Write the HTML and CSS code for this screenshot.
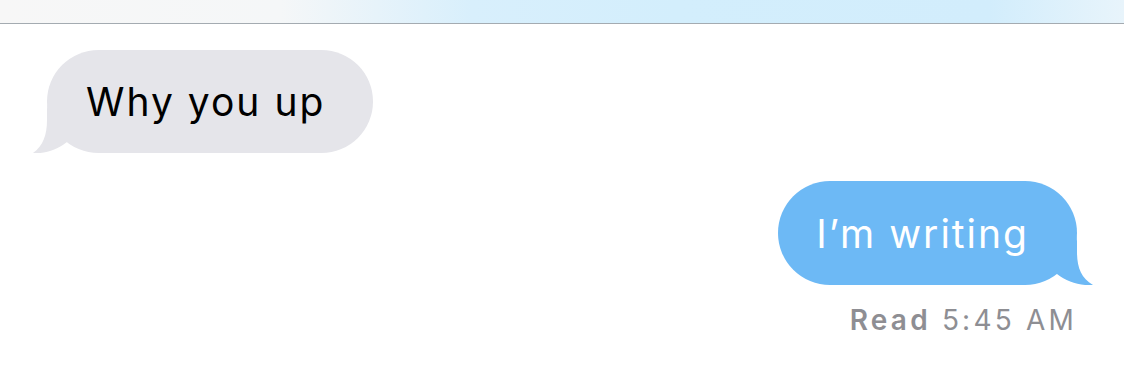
FILE: index.html
```html
<!DOCTYPE html>
<html lang="en">
<head>
    <meta charset="UTF-8">
    <meta name="viewport" content="width=device-width, initial-scale=1.0">
    <title>Messages</title>
    <link rel="stylesheet" href="styles.css">
</head>
<body>
    <div class="topbar"></div>

    <div class="thread">
        <div class="bubble from">
            <span class="text">Why you up</span>
            <svg class="tail" width="40" height="54" viewBox="0 0 40 54">
                <path d="M18,0 L16,10 L16,21 C16,36 12,47 2,54 C14,55 26,51 36,43 L36,0 Z" fill="#e5e5ea"/>
            </svg>
        </div>

        <div class="bubble to">
            <span class="text">I’m writing</span>
            <svg class="tail" width="40" height="54" viewBox="0 0 40 54">
                <path d="M22,0 L24,10 L24,21 C24,36 28,47 40,54 C27,55 14,51 4,43 L4,0 Z" fill="#6db9f5"/>
            </svg>
        </div>

        <div class="receipt"><b>Read</b> 5:45 AM</div>
    </div>
</body>
</html>
```

FILE: styles.css
```css
body {
    margin: 0;
    background-color: #fff;
    font-family: Inter, "Open Sans", Arial, sans-serif;
}
.topbar {
    height: 23px;
    background: linear-gradient(to right, #f7f7f7 0%, #f5f7f8 25%, #d8effc 42%, #d3eefc 60%, #d2edfc 88%, #e8f4fb 100%);
    border-bottom: 1px solid #a4abb1;
}
.thread {
    display: flex;
    flex-direction: column;
    padding: 26px 47px 0 47px;
}
.bubble {
    position: relative;
    display: flex;
    align-items: center;
    height: 103px;
    border-radius: 52px;
    font-size: 39px;
    letter-spacing: 2px;
}
.bubble .text {
    position: relative;
    z-index: 1;
}
.tail {
    position: absolute;
    bottom: 0;
}
.from {
    align-self: flex-start;
    background-color: #e5e5ea;
    color: #000;
    padding: 0 48px 0 39px;
}
.from .tail {
    left: -16px;
}
.to {
    align-self: flex-end;
    margin-top: 28px;
    height: 104px;
    background-color: #6db9f5;
    color: #fff;
    padding: 0 48px 0 38px;
}
.to .tail {
    right: -16px;
}
.receipt {
    align-self: flex-end;
    margin-top: 18px;
    font-size: 28px;
    letter-spacing: 3.2px;
    color: #8e8e93;
}
.receipt b {
    font-weight: 600;
}
```
